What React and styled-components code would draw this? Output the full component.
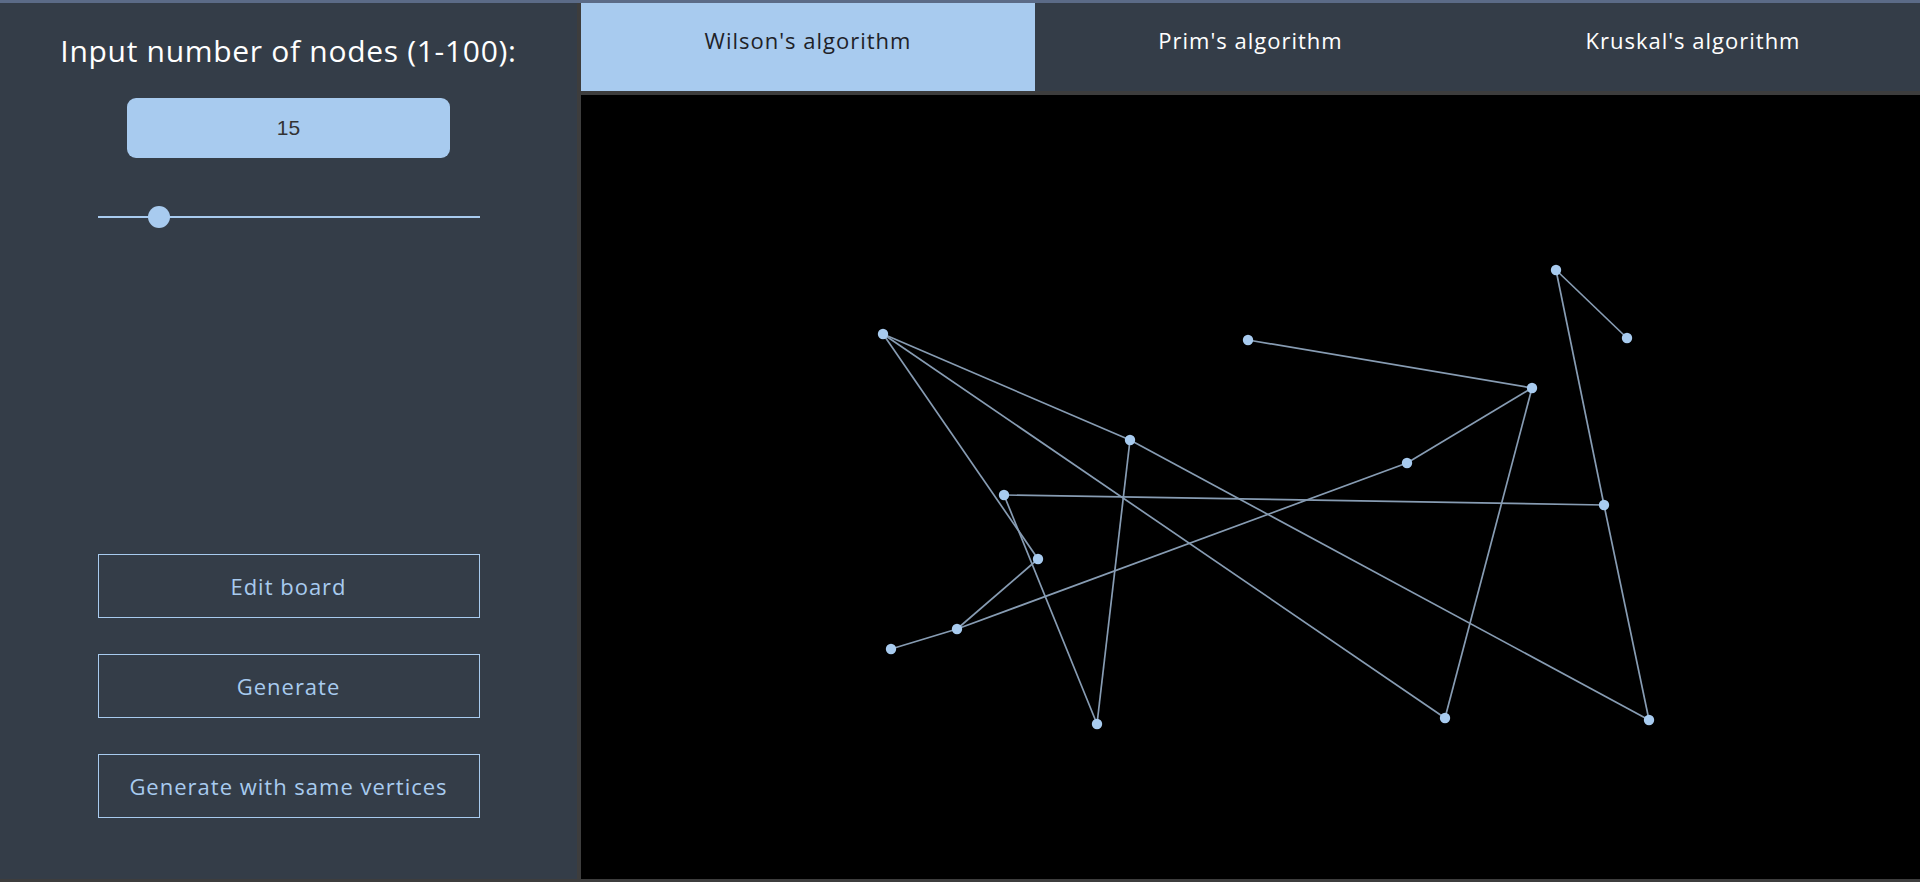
import React, { useState } from 'react';
import styled, { createGlobalStyle } from 'styled-components';

const GlobalStyle = createGlobalStyle`
  html, body {
    margin: 0;
    padding: 0;
    background: #3d3d3d;
    overflow: hidden;
  }
  * {
    box-sizing: border-box;
  }
`;

const Page = styled.div`
  display: flex;
  gap: 4px;
  height: 882px;
  border-top: 3px solid #5b6b87;
  padding-bottom: 3px;
  font-family: "Open Sans", "Liberation Sans", sans-serif;
`;

const Sidebar = styled.aside`
  width: 577px;
  flex-shrink: 0;
  display: flex;
  flex-direction: column;
  align-items: center;
  padding: 31px 0 61px;
  background: #343d48;
`;

const Title = styled.h1`
  margin: 0;
  font-size: 30px;
  font-weight: 400;
  line-height: 34px;
  letter-spacing: 0.7px;
  color: #ffffff;
`;

const NumberInput = styled.input`
  width: 323px;
  height: 60px;
  margin-top: 30px;
  border: none;
  border-radius: 9px;
  background: #a8cbef;
  color: #333333;
  font-family: "Liberation Sans", Arial, sans-serif;
  font-size: 21px;
  text-align: center;
  outline: none;
`;

const Slider = styled.input`
  -webkit-appearance: none;
  appearance: none;
  width: 382px;
  height: 22px;
  margin: 48px 0 0;
  background: transparent;

  &::-webkit-slider-runnable-track {
    height: 2px;
    background: #a8cbef;
  }
  &::-webkit-slider-thumb {
    -webkit-appearance: none;
    width: 22px;
    height: 22px;
    margin-top: -10px;
    border: none;
    border-radius: 50%;
    background: #a8cbef;
  }
`;

const ButtonGroup = styled.div`
  display: flex;
  flex-direction: column;
  gap: 36px;
  margin-top: auto;
`;

const ActionButton = styled.button`
  width: 382px;
  height: 64px;
  border: 1px solid #a8cbef;
  background: transparent;
  color: #a8cbef;
  font-family: inherit;
  font-size: 22px;
  letter-spacing: 1px;
  cursor: pointer;
`;

const Main = styled.main`
  flex: 1;
  min-width: 0;
  display: flex;
  flex-direction: column;
  gap: 4px;
`;

const TabBar = styled.nav`
  flex-shrink: 0;
  display: grid;
  grid-template-columns: 454px 431px 1fr;
  height: 88px;
  background: #343d48;
`;

const Tab = styled.div`
  display: flex;
  justify-content: center;
  padding-top: 22px;
  font-size: 22px;
  line-height: 30px;
  letter-spacing: 1px;
  background: ${(p) => (p.$active ? '#a8cbef' : 'transparent')};
  color: ${(p) => (p.$active ? '#1e2228' : '#ffffff')};
  cursor: pointer;
`;

const Board = styled.div`
  flex: 1;
  min-height: 0;
  background: #000000;

  svg {
    display: block;
  }
`;

const nodes = [
  [302, 239], [667, 245], [975, 175], [1046, 243], [951, 293],
  [549, 345], [826, 368], [423, 400], [1023, 410], [457, 464],
  [376, 534], [310, 554], [516, 629], [864, 623], [1068, 625],
];

const edges = [
  [1, 6], [6, 15], [1, 14], [1, 10], [6, 13], [8, 9], [8, 13], [10, 11],
  [12, 11], [11, 7], [7, 5], [2, 5], [5, 14], [3, 4], [3, 9], [9, 15],
];

function Graph() {
  return (
    <svg width="1339" height="784" viewBox="0 0 1339 784">
      {edges.map(([a, b], i) => (
        <line
          key={i}
          x1={nodes[a - 1][0]}
          y1={nodes[a - 1][1]}
          x2={nodes[b - 1][0]}
          y2={nodes[b - 1][1]}
          stroke="#879cb3"
          strokeWidth="1.7"
        />
      ))}
      {nodes.map(([x, y], i) => (
        <circle key={i} cx={x} cy={y} r="5.2" fill="#a8cbef" />
      ))}
    </svg>
  );
}

const tabs = ["Wilson's algorithm", "Prim's algorithm", "Kruskal's algorithm"];

export default function App() {
  const [count, setCount] = useState(15);
  const [active, setActive] = useState(0);

  return (
    <>
      <GlobalStyle />
      <Page>
        <Sidebar>
          <Title>Input number of nodes (1-100):</Title>
          <NumberInput
            type="text"
            value={count}
            onChange={(e) => setCount(e.target.value)}
          />
          <Slider
            type="range"
            min="1"
            max="100"
            value={count}
            onChange={(e) => setCount(e.target.value)}
          />
          <ButtonGroup>
            <ActionButton>Edit board</ActionButton>
            <ActionButton>Generate</ActionButton>
            <ActionButton>Generate with same vertices</ActionButton>
          </ButtonGroup>
        </Sidebar>
        <Main>
          <TabBar>
            {tabs.map((t, i) => (
              <Tab key={t} $active={i === active} onClick={() => setActive(i)}>
                {t}
              </Tab>
            ))}
          </TabBar>
          <Board>
            <Graph />
          </Board>
        </Main>
      </Page>
    </>
  );
}
